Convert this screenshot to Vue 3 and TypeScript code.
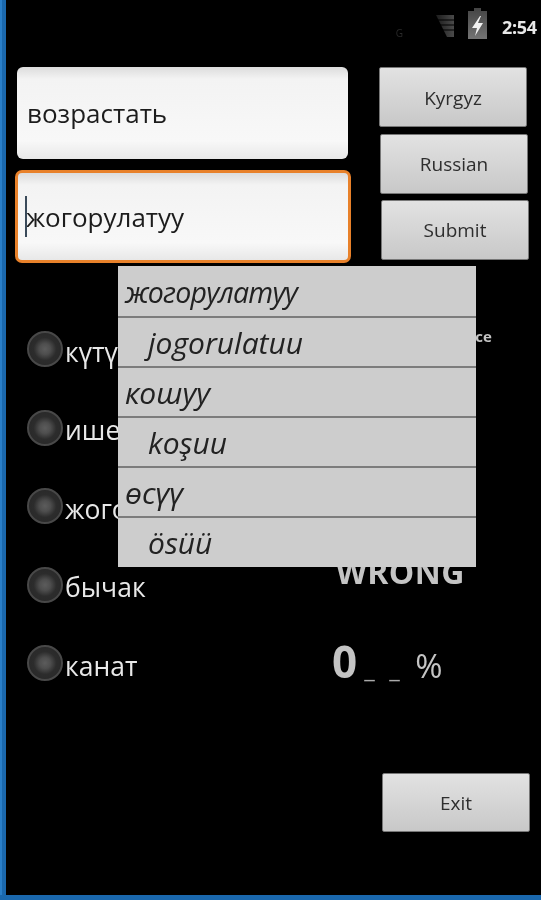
<script setup lang="ts">
const options = ['күтүү', 'ишенүү', 'жогорулатуу', 'бычак', 'канат']
const suggestions = [
  { text: 'жогорулатуу', sub: false },
  { text: 'jogorulatuu', sub: true },
  { text: 'кошуу', sub: false },
  { text: 'koşuu', sub: true },
  { text: 'өсүү', sub: false },
  { text: 'ösüü', sub: true },
]
</script>

<template>
  <div class="screen">
    <div class="status">
      <span class="net">G</span>
      <svg class="signal" width="18" height="22" viewBox="0 0 18 22">
        <defs>
          <linearGradient id="sig" x1="0" y1="0" x2="1" y2="0">
            <stop offset="0" stop-color="#1c1c1c" />
            <stop offset="1" stop-color="#4a4a4a" />
          </linearGradient>
        </defs>
        <path d="M0 0H18V22H11Z" fill="url(#sig)" />
        <path d="M0 5H18M0 10H18M0 15H18" stroke="#000" stroke-width="1" />
      </svg>
      <svg class="battery" width="19" height="31" viewBox="0 0 19 31">
        <defs>
          <linearGradient id="bat" x1="0" y1="0" x2="0" y2="1">
            <stop offset="0" stop-color="#444" />
            <stop offset="1" stop-color="#747474" />
          </linearGradient>
        </defs>
        <path d="M6 0H13V3H19V31H0V3H6Z" fill="url(#bat)" />
        <path d="M12 8L4 20H9L7 28L15 15H10L13 8Z" fill="#f2f2f2" />
      </svg>
      <span class="time">2:54</span>
    </div>

    <div class="top">
      <div class="fields">
        <div class="field">возрастать</div>
        <div class="field focused"><i class="caret"></i>жогорулатуу</div>
      </div>
      <div class="buttons">
        <button class="btn kyrgyz">Kyrgyz</button>
        <button class="btn russian">Russian</button>
        <button class="btn submit">Submit</button>
      </div>
    </div>

    <div class="middle">
      <ul class="radios">
        <li v-for="o in options" :key="o" class="radio-row">
          <span class="radio"></span>
          <span class="label">{{ o }}</span>
        </li>
      </ul>
      <div class="results">
        <div class="choice">Choice</div>
        <div class="wrong">WRONG</div>
        <div class="score">
          <span class="zero">0</span>
          <span class="dash">_</span>
          <span class="dash">_</span>
          <span class="pct">%</span>
        </div>
      </div>
    </div>

    <div class="bottom">
      <button class="btn exit">Exit</button>
    </div>

    <div class="dropdown">
      <div v-for="s in suggestions" :key="s.text" :class="['item', { sub: s.sub }]">{{ s.text }}</div>
    </div>
  </div>
</template>

<style scoped>
.screen {
  position: relative;
  box-sizing: border-box;
  width: 541px;
  height: 900px;
  overflow: hidden;
  padding-left: 7px;
  background: #000;
  border-bottom: 5px solid #1a68ad;
  box-shadow: inset 2px 0 0 #2a7fc9, inset 6px 0 0 #1a68ad;
  font-family: "Open Sans", "Noto Sans", sans-serif;
  filter: blur(0.5px);
}

.status {
  display: flex;
  align-items: flex-start;
  justify-content: flex-end;
  height: 67px;
  padding-top: 8px;
  box-sizing: border-box;
}
.net {
  margin: 18px 33px 0 0;
  font-size: 10px;
  color: #2a2a2a;
}
.signal {
  margin: 7px 14px 0 0;
}
.battery {
  margin-right: 15px;
}
.time {
  width: 39px;
  margin-top: 7px;
  font-size: 18px;
  font-weight: 700;
  line-height: 24px;
  letter-spacing: -0.3px;
  color: #e8e8e8;
}

.top {
  display: flex;
  height: 196px;
}
.fields {
  display: flex;
  flex-direction: column;
  width: 336px;
  margin-left: 8px;
}
.field {
  box-sizing: border-box;
  display: flex;
  align-items: center;
  width: 331px;
  height: 92px;
  margin-left: 2px;
  padding-left: 10px;
  padding-bottom: 1px;
  border-radius: 6px;
  background: linear-gradient(#dcdcdc 0, #f3f3f3 12px, #f8f8f8 80%, #e8e8e8 100%);
  color: #1c1c1c;
  font-size: 26px;
}
.focused {
  position: relative;
  width: 336px;
  height: 93px;
  margin-top: 11px;
  margin-left: 0;
  padding-left: 8px;
  padding-bottom: 0;
  padding-top: 1px;
  border: 3px solid #e8812a;
  border-radius: 7px;
}
.caret {
  position: absolute;
  left: 7px;
  top: 23px;
  width: 2px;
  height: 41px;
  background: #3a4a5a;
}

.buttons {
  display: flex;
  flex-direction: column;
  margin-left: 28px;
}
.btn {
  display: block;
  width: 148px;
  height: 60px;
  padding: 0;
  border: 1px solid #777;
  border-radius: 2px;
  background: linear-gradient(#e2e2e2, #c8c8c8);
  color: #2e2e2e;
  font-family: inherit;
  font-size: 19px;
}
.kyrgyz {
  padding-top: 2px;
}
.russian {
  margin: 7px 0 0 1px;
}
.submit {
  margin: 6px 0 0 2px;
}

.middle {
  display: flex;
  height: 510px;
}
.radios {
  width: 323px;
  margin: 47px 0 0;
  padding: 0 0 0 20px;
  box-sizing: border-box;
  list-style: none;
}
.radio-row {
  display: flex;
  align-items: center;
  height: 78.5px;
  color: #e8e8e8;
  font-size: 26.5px;
}
.radio {
  box-sizing: border-box;
  flex: none;
  width: 36px;
  height: 36px;
  margin-right: 2px;
  border: 2px solid #484848;
  border-radius: 50%;
  background: radial-gradient(circle, #5c5c5c 0, #4e4e4e 24%, #2c2c2c 50%, #262626 100%);
}
.label {
  padding-top: 5px;
  white-space: nowrap;
}

.results {
  flex: 1;
  position: relative;
  color: #c4c4c4;
}
.choice {
  margin: 63px 0 0 112px;
  font-size: 15px;
  font-weight: 700;
  line-height: 20px;
}
.wrong {
  margin: 204px 0 0 6px;
  font-size: 32px;
  font-weight: 700;
  line-height: 44px;
  letter-spacing: 0.4px;
}
.score {
  display: flex;
  align-items: baseline;
  margin-top: 39px;
  padding-left: 2px;
  line-height: 56px;
}
.zero {
  font-size: 44px;
  font-weight: 700;
}
.dash {
  margin-left: 7px;
  width: 18px;
  font-size: 24px;
  color: #aaa;
}
.pct {
  margin-left: 8px;
  font-size: 33px;
}

.bottom {
  display: flex;
  justify-content: flex-end;
  padding-right: 11px;
}
.exit {
  margin-top: 0;
  height: 59px;
}

.dropdown {
  position: absolute;
  left: 118px;
  top: 266px;
  width: 358px;
  height: 301px;
  display: flex;
  flex-direction: column;
  background: #cdcdcd;
}
.item {
  box-sizing: border-box;
  height: 50.2px;
  flex: none;
  padding-left: 7px;
  border-bottom: 2px solid #7c7c7c;
  color: #222;
  font-size: 30px;
  font-style: italic;
  line-height: 50px;
  white-space: nowrap;
}
.item:first-child {
  height: 51.5px;
  line-height: 52px;
  font-size: 28.5px;
  letter-spacing: -0.8px;
}
.item:last-child {
  border-bottom: 0;
}
.sub {
  padding-left: 30px;
}
</style>
